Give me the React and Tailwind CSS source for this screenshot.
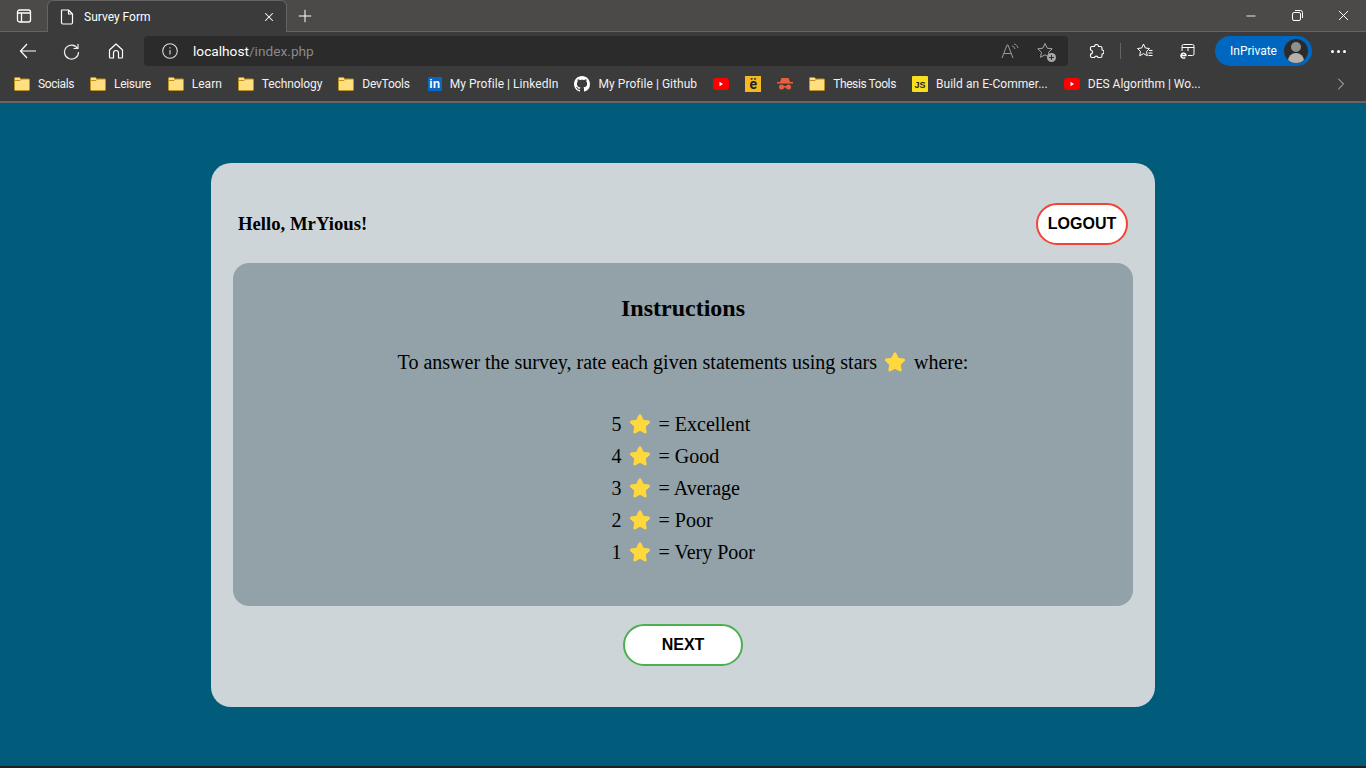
import React from 'react';
import { Minus, X, Plus, ChevronRight } from 'lucide-react';

const Folder = () => (
    <svg width="16" height="14" viewBox="0 0 16 14" className="shrink-0">
        <path d="M.5 1.200C.5.800.8.500 1.200.500h4.300l1.500 1.500h7.800c.4 0 .7.300.7.700v10.100c0 .4-.3.700-.7.700H1.200c-.4 0-.7-.3-.7-.7z" fill="#ffdf80" stroke="#bd9020" />
        <path d="M.5 3.500h5.500L7.500 2" fill="none" stroke="#bd9020" />
    </svg>
);

const YouTube = () => (
    <svg width="16" height="12" viewBox="0 0 16 12" className="shrink-0">
        <rect width="16" height="12" rx="3" fill="#f00" />
        <path d="M6.500 3.800 10 6l-3.500 2.200z" fill="#fff" />
    </svg>
);

const LinkedIn = () => (
    <div className="w-[14px] h-[14px] bg-[#0a66c2] rounded-[1px] shrink-0 flex items-center justify-center text-white text-[12px] font-bold leading-none font-['Liberation_Sans',sans-serif]">in</div>
);

const Github = () => (
    <svg width="16" height="16" viewBox="0 0 16 16" fill="#fff" className="shrink-0">
        <path d="M8 0C3.580 0 0 3.580 0 8c0 3.540 2.290 6.530 5.470 7.590.4.070.55-.17.55-.38 0-.19-.01-.82-.01-1.490-2.010.37-2.530-.49-2.690-.94-.09-.23-.48-.94-.82-1.130-.28-.15-.68-.52-.01-.53.630-.01 1.080.58 1.230.82.720 1.210 1.870.87 2.330.66.070-.52.280-.87.510-1.070-1.780-.2-3.640-.89-3.640-3.950 0-.87.310-1.590.820-2.150-.08-.2-.36-1.020.08-2.120 0 0 .67-.21 2.200.82.640-.18 1.320-.27 2-.27s1.360.09 2 .27c1.530-1.040 2.200-.82 2.200-.82.440 1.100.160 1.920.08 2.120.51.560.82 1.270.82 2.150 0 3.070-1.870 3.750-3.650 3.950.29.250.54.730.54 1.480 0 1.070-.01 1.930-.01 2.200 0 .21.150.460.550.380A8.010 8.010 0 0 0 16 8c0-4.420-3.580-8-8-8z" />
    </svg>
);

const Spy = () => (
    <svg width="16" height="14" viewBox="0 0 16 14" fill="#e8603c" className="shrink-0">
        <path d="M4.500 1h7l1.500 4H3z" />
        <rect x="0" y="5" width="16" height="1.500" />
        <circle cx="4.500" cy="10" r="2.500" />
        <circle cx="11.500" cy="10" r="2.500" />
        <rect x="6" y="9" width="4" height="1.500" />
    </svg>
);

const Star = () => (
    <svg width="22" height="22" viewBox="0 0 24 24" className="shrink-0 ml-[7px] mr-[8px]">
        <path d="M12 3l2.900 5.900 6.500.9-4.700 4.600 1.100 6.500-5.800-3.100-5.800 3.100 1.100-6.500L2.400 9.800l6.500-.9z" fill="#ffd83d" stroke="#ffd83d" strokeWidth="3" strokeLinejoin="round" />
    </svg>
);

const Bookmark = ({ icon, label, className = '', labelClass = '' }) => (
    <div className={`flex items-center gap-2 shrink-0 ${className}`}>
        {icon}
        {label && <span className={`text-[12px] text-[#f1f1f1] whitespace-nowrap ${labelClass}`}>{label}</span>}
    </div>
);

const ratings = [
    ['5', 'Excellent'],
    ['4', 'Good'],
    ['3', 'Average'],
    ['2', 'Poor'],
    ['1', 'Very Poor'],
];

const Browser = () => (
    <header className="shrink-0 font-['Roboto','Noto_Sans',sans-serif]">
        {/* tab strip */}
        <div className="h-[32px] bg-[#4c4a48] border-b border-[#666462] flex items-end text-white">
            <div className="w-[47px] h-[31px] flex items-center justify-center">
                <svg width="16" height="16" viewBox="0 0 16 16" fill="none" stroke="#fff" strokeWidth="1.300">
                    <rect x="1.500" y="2" width="13" height="12" rx="2" />
                    <path d="M1.500 5h13M5.500 5v9" />
                </svg>
            </div>
            <div className="w-[240px] h-[32px] -mb-px bg-[#3b3b3b] rounded-t-[6px] border-t border-x border-[#666462] flex items-center pl-[12px] pr-[10px]">
                <svg width="14" height="16" viewBox="0 0 14 16" fill="none" stroke="#fff" strokeWidth="1.200" strokeLinejoin="round">
                    <path d="M1.500 1h7l4 4v8.500a1.500 1.500 0 0 1-1.500 1.500H3a1.500 1.500 0 0 1-1.500-1.500zM8.500 1v4h4" />
                </svg>
                <span className="ml-[10px] text-[12px] flex-1">Survey Form</span>
                <X size={14} strokeWidth={1.800} />
            </div>
            <div className="w-[36px] h-[31px] flex items-center justify-center">
                <Plus size={20} strokeWidth={1.200} />
            </div>
            <div className="flex-1" />
            <div className="flex items-center h-[31px] text-white">
                <div className="w-[46px] flex justify-center"><Minus size={14} strokeWidth={1.500} /></div>
                <div className="w-[46px] flex justify-center">
                    <svg width="11" height="11" viewBox="0 0 11 11" fill="none" stroke="#fff">
                        <rect x=".5" y="2.500" width="8" height="8" rx="1.500" />
                        <path d="M3 .5h5.500A2 2 0 0 1 10.500 2.500V8" />
                    </svg>
                </div>
                <div className="w-[46px] flex justify-center"><X size={17} strokeWidth={1.400} /></div>
            </div>
        </div>
        {/* toolbar */}
        <div className="h-[38px] bg-[#3b3b3b] flex items-center text-white">
            <div className="w-[144px] flex items-center pl-[19px]">
                <svg width="18" height="16" viewBox="0 0 18 16" fill="none" stroke="#fff" strokeWidth="1.200">
                    <path d="M8 1 1.500 8 8 15M1.500 8H17" />
                </svg>
                <svg width="17" height="17" viewBox="0 0 17 17" fill="none" stroke="#eeeeee" strokeWidth="1.200" className="ml-[26px]">
                    <path d="M14.500 5.500A7 7 0 1 0 15.500 9M15 1v4.500h-4.500" />
                </svg>
                <svg width="16" height="16" viewBox="0 0 16 16" fill="none" stroke="#fff" strokeWidth="1.200" strokeLinejoin="round" className="ml-[28px]">
                    <path d="M1.500 7 8 1l6.500 6v7a1 1 0 0 1-1 1H10.500V10a2.500 2.500 0 0 0-5 0v5H2.500a1 1 0 0 1-1-1z" />
                </svg>
            </div>
            <div className="w-[924px] h-[30px] bg-[#2b2b2b] rounded-[4px] flex items-center pl-[18px] pr-[14px]">
                <svg width="16" height="16" viewBox="0 0 16 16" fill="none" stroke="#dddddd" strokeWidth="1.100">
                    <circle cx="8" cy="8" r="7.300" />
                    <path d="M8 7v4.500M8 4.200v1.200" />
                </svg>
                <span className="ml-[15px] text-[13.700px] leading-[30px]">localhost<span className="text-[#8a8a8a]">/index.php</span></span>
                <div className="flex-1" />
                <svg width="18" height="16" viewBox="0 0 18 16" fill="none" stroke="#9a9a9a" className="mr-[17px]">
                    <path d="M1 15 6 2h1l5 13M3 10.500h7M11 3c1.500.3 2.500 1.300 3 3M13 1c2 .4 3.500 2 4 4" />
                </svg>
                <div className="relative">
                    <svg width="18" height="18" viewBox="0 0 18 18" fill="none" stroke="#a8a8a8" strokeLinejoin="round">
                        <path d="M9 1.500l2.200 4.700 5 .6-3.700 3.500 1 5-4.500-2.500-4.500 2.500 1-5L1.800 6.800l5-.6z" />
                    </svg>
                    <svg width="9" height="9" viewBox="0 0 9 9" className="absolute -right-[2px] -bottom-[2px]">
                        <circle cx="4.500" cy="4.500" r="4.500" fill="#a8a8a8" />
                        <path d="M4.500 2v5M2 4.500h5" stroke="#2b2b2b" />
                    </svg>
                </div>
            </div>
            <div className="ml-[21px] flex items-center">
                <svg width="15" height="15" viewBox="0 0 15 15" fill="none" stroke="#fff" strokeWidth="1.100" strokeLinejoin="round">
                    <path d="M5.500 2.500a2 2 0 0 1 4 0h2a1.500 1.500 0 0 1 1.500 1.500v2a2 2 0 0 1 0 4v2a1.500 1.500 0 0 1-1.500 1.500h-2.500a1.800 1.800 0 0 0-3.500 0H3A1.500 1.500 0 0 1 1.500 12V10a2 2 0 0 0 0-4V4A1.500 1.500 0 0 1 3 2.500z" />
                </svg>
                <div className="w-px h-[16px] bg-[#666666] ml-[16px] mr-[15px]" />
                <svg width="18" height="18" viewBox="0 0 18 18" fill="none" stroke="#fff" strokeLinejoin="round">
                    <path d="M7.500 2l1.800 4 4.200.5-3 3 .8 4.300-3.800-2.200-3.800 2.200.8-4.300-3-3 4.200-.5z" />
                    <path d="M13 8.500h3.500M12.500 11h4M12.500 13.500h4" />
                </svg>
                <svg width="16" height="16" viewBox="0 0 16 16" fill="none" stroke="#fff" className="ml-[26px]">
                    <path d="M2 8V3a1.500 1.500 0 0 1 1.500-1.500h9A1.500 1.500 0 0 1 14 3v8a1.500 1.500 0 0 1-1.500 1.500H8M2 4.500h12M8 4.500v3.500" />
                    <path d="M1 12.500h5a2.500 2.500 0 1 0-.8 2" strokeWidth="1.400" />
                </svg>
                <div className="ml-[19px] w-[97px] h-[30px] rounded-full bg-[#0067c0] flex items-center pl-[15px] pr-[4px] justify-between">
                    <span className="text-[12px]">InPrivate</span>
                    <div className="w-[24px] h-[24px] rounded-full bg-[#2b2b2b] overflow-hidden flex flex-col items-center pt-[3px]">
                        <div className="w-[10px] h-[10px] rounded-full bg-[#8f8f8b]" />
                        <div className="w-[16px] h-[10px] mt-[1px] rounded-t-full bg-[#b5b1ab]" />
                    </div>
                </div>
                <div className="ml-[19px] flex gap-[3px]">
                    <div className="w-[3px] h-[3px] rounded-full bg-white" />
                    <div className="w-[3px] h-[3px] rounded-full bg-white" />
                    <div className="w-[3px] h-[3px] rounded-full bg-white" />
                </div>
            </div>
        </div>
        {/* bookmarks */}
        <div className="h-[33px] bg-[#3b3b3b] border-b-[2px] border-[#666666] flex items-center pl-[14px] pb-[3px]">
            <Bookmark icon={<Folder />} label="Socials" labelClass="tracking-[-0.4px]" />
            <Bookmark icon={<Folder />} label="Leisure" labelClass="tracking-[-0.3px]" className="ml-[16px]" />
            <Bookmark icon={<Folder />} label="Learn" className="ml-[17px]" />
            <Bookmark icon={<Folder />} label="Technology" labelClass="tracking-[-0.1px]" className="ml-[16px]" />
            <Bookmark icon={<Folder />} label="DevTools" labelClass="tracking-[-0.25px]" className="ml-[16px]" />
            <Bookmark icon={<LinkedIn />} label="My Profile | LinkedIn" labelClass="tracking-[0.05px]" className="ml-[18px]" />
            <Bookmark icon={<Github />} label="My Profile | Github" labelClass="tracking-[0.05px]" className="ml-[16px]" />
            <Bookmark icon={<YouTube />} className="ml-[16px]" />
            <div className="ml-[16px] w-[16px] h-[16px] bg-[#f5b921] text-[#222222] text-[14px] font-bold leading-[17px] text-center shrink-0">ë</div>
            <Bookmark icon={<Spy />} className="ml-[16px]" />
            <Bookmark icon={<Folder />} label="Thesis Tools" labelClass="tracking-[-0.4px]" className="ml-[16px]" />
            <Bookmark icon={<div className="w-[16px] h-[16px] bg-[#f7df1e] text-[#222222] text-[9px] font-bold leading-[18px] text-center rounded-[1px] font-['Liberation_Sans',sans-serif]">JS</div>} label="Build an E-Commer..." labelClass="tracking-[0.05px]" className="ml-[16px]" />
            <Bookmark icon={<YouTube />} label="DES Algorithm | Wo..." className="ml-[16px]" />
            <div className="flex-1" />
            <ChevronRight size={20} strokeWidth={1.200} className="text-[#cccccc] mr-[15px]" />
        </div>
    </header>
);

const App = () => {
    return (
        <div className="w-[1366px] h-[768px] overflow-hidden flex flex-col bg-[#005c7a] border-b-[2px] border-[#222222]">
            <Browser />
            <main className="flex-1 flex justify-center pt-[60px] font-['Liberation_Serif',serif] text-black">
                <div className="w-[944px] h-[544px] bg-[#cdd5d8] rounded-[20px] px-[22px] pt-[40px] flex flex-col">
                    <div className="flex items-center justify-between pl-[5px] pr-[5px] h-[42px]">
                        <h2 className="text-[18.720px] font-bold">Hello, MrYious!</h2>
                        <button className="w-[92px] h-[42px] bg-white border-2 border-[#f44336] rounded-full text-[16px] font-bold font-['Liberation_Sans',sans-serif]">LOGOUT</button>
                    </div>
                    <section className="mt-[18px] h-[343px] bg-[#92a2a8] rounded-[16px] flex flex-col items-center pt-[31px] text-[20px]">
                        <h1 className="text-[24px] font-bold leading-[28px]">Instructions</h1>
                        <p className="mt-[24px] flex items-center h-[32px]">To answer the survey, rate each given statements using stars <Star /> where:</p>
                        <div className="mt-[30px] w-[143px] flex flex-col">
                            {ratings.map(([n, label]) => (
                                <div key={n} className="h-[32px] flex items-center whitespace-nowrap">
                                    {n}<Star />= {label}
                                </div>
                            ))}
                        </div>
                    </section>
                    <button className="mt-[18px] self-center w-[120px] h-[42px] bg-white border-2 border-[#4caf50] rounded-full text-[16px] font-bold font-['Liberation_Sans',sans-serif]">NEXT</button>
                </div>
            </main>
        </div>
    );
};

export default App;
